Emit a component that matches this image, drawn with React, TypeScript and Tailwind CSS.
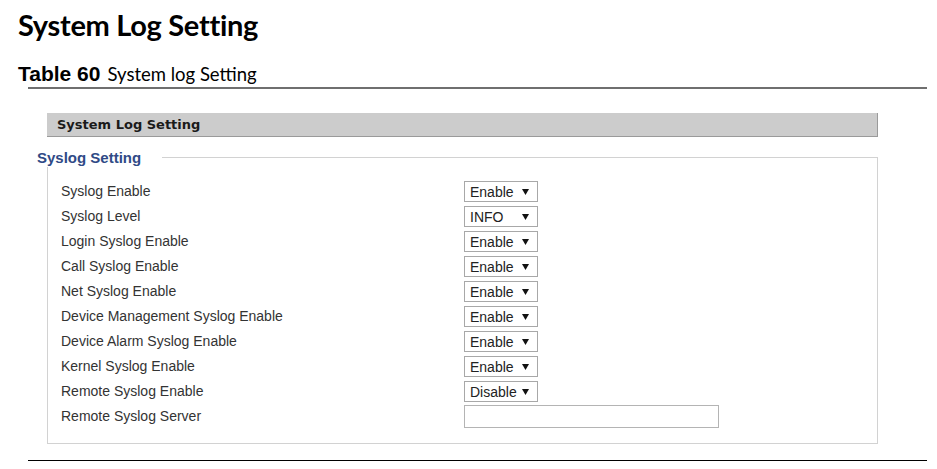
import React from "react";

type Row = {
  label: string;
  value?: string;
  input?: boolean;
};

const rows: Row[] = [
  { label: "Syslog Enable", value: "Enable" },
  { label: "Syslog Level", value: "INFO" },
  { label: "Login Syslog Enable", value: "Enable" },
  { label: "Call Syslog Enable", value: "Enable" },
  { label: "Net Syslog Enable", value: "Enable" },
  { label: "Device Management Syslog Enable", value: "Enable" },
  { label: "Device Alarm Syslog Enable", value: "Enable" },
  { label: "Kernel Syslog Enable", value: "Enable" },
  { label: "Remote Syslog Enable", value: "Disable" },
  { label: "Remote Syslog Server", input: true },
];

function FakeSelect({ value }: { value: string }) {
  return (
    <div className="flex h-[21px] w-[74px] items-center justify-between border border-[#a8a8a8] bg-white pl-[5px] pr-[8px] text-[14px] text-[#222]">
      <span className="leading-none">{value}</span>
      <svg width="7" height="6" viewBox="0 0 7 6">
        <path d="M0 0 L7 0 L3.5 6 Z" fill="#111" />
      </svg>
    </div>
  );
}

export default function App() {
  return (
    <div className="h-[469px] w-[937px] overflow-hidden bg-white">
      <h1 className="pl-[18px] pt-[7px] font-['Lato',sans-serif] text-[29px] font-bold leading-[36px] tracking-[-0.3px] text-black">
        System Log Setting
      </h1>

      <div className="mt-[21px] flex items-baseline pl-[18px] leading-[20px] text-black">
        <span className="font-['Liberation_Sans',Arial,sans-serif] text-[21px] font-bold">Table 60</span>
        <span className="ml-[7px] font-['Lato',sans-serif] text-[18.5px]">System log Setting</span>
      </div>
      <div className="ml-[28px] mt-[3px] h-[2px] w-[899px] bg-[#6f6f6f]" />

      <div className="ml-[47px] mt-[24px] w-[831px] font-['Liberation_Sans',Arial,sans-serif]">
        <div className="flex h-[24px] items-center border-b border-r border-[#9a9a9a] bg-[#cccccc] pl-[10px] font-['DejaVu_Sans',Verdana,sans-serif] text-[13px] font-bold text-[#1a1a1a]">
          System Log Setting
        </div>

        <div className="relative mt-[20px] border border-[#d2d2d2] pb-[14px] pt-[21px]">
          <div className="absolute left-[-11px] top-[-10px] bg-white pr-[21px] text-[15px] font-bold leading-[19px] text-[#2f4a86]">
            Syslog Setting
          </div>

          {rows.map((row) => (
            <div key={row.label} className="flex h-[25px] items-center">
              <div className="w-[416px] pl-[13px] text-[14px] text-[#333]">{row.label}</div>
              {row.input ? (
                <div className="h-[23px] w-[255px] border border-[#b4b4b4] bg-white" />
              ) : (
                <FakeSelect value={row.value ?? ""} />
              )}
            </div>
          ))}
        </div>
      </div>

      <div className="ml-[28px] mt-[16px] h-px w-[899px] bg-black" />
    </div>
  );
}
